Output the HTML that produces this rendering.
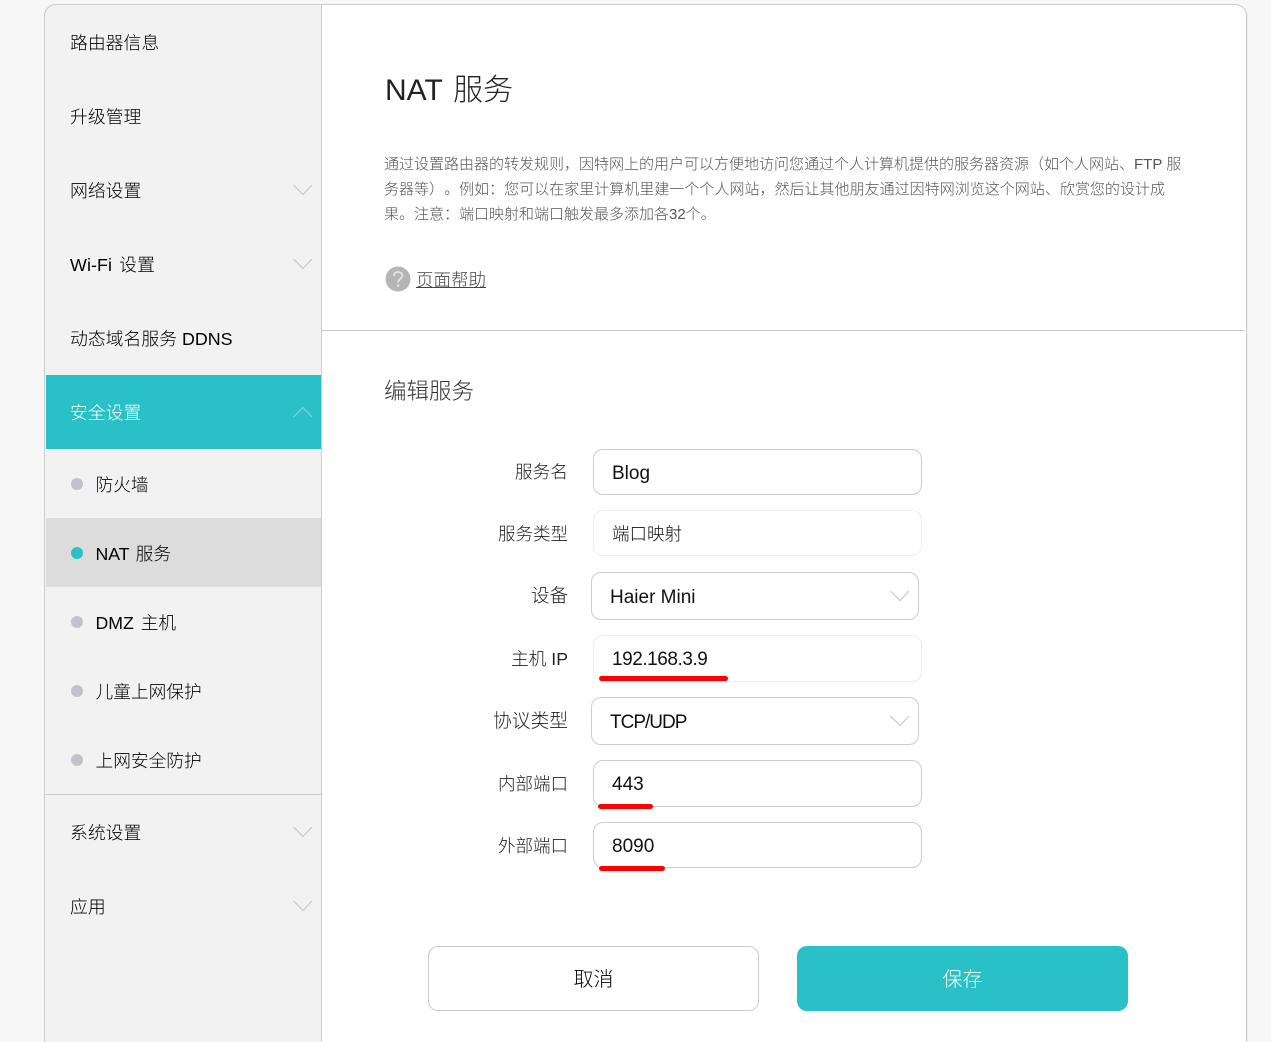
<!DOCTYPE html>
<html lang="zh-CN">
<head>
<meta charset="utf-8">
<title>NAT 服务</title>
<style>
html,body{margin:0;padding:0;width:1271px;height:1042px;overflow:hidden;background:#f7f7f7}
body{position:relative;font-family:"Liberation Sans","Noto Sans CJK SC",sans-serif;font-weight:300;color:#222}
div,a,svg{position:absolute;box-sizing:border-box}
#card{left:44px;top:4px;width:1203px;height:1060px;background:#fff;border:1px solid #ccc;border-radius:12px;overflow:hidden;box-shadow:1px 0 1px rgba(0,0,0,.04)}
#side{left:44px;top:4px;width:278px;height:1060px;background:#f2f2f2;border:1px solid #ccc;border-radius:12px 0 0 0}
.m{left:70px;font-size:17.85px;line-height:26px;height:26px;white-space:nowrap;color:#000}
.s{left:95.5px;font-size:17.7px;line-height:26px;height:26px;white-space:nowrap;color:#000}
.dot{left:71px;width:12px;height:12px;border-radius:50%;background:#c0c2cc}
.chev{width:20px;height:12px;fill:none;stroke:#c9c9c9;stroke-width:1.2}
.p{left:384px;font-size:15px;line-height:25px;height:25px;white-space:nowrap;color:#555;text-align-last:justify}
.l{right:703px;font-size:17.5px;line-height:26px;height:26px;white-space:nowrap;text-align:right;color:#222}
.i{background:#fff;border:1px solid #ccc;border-radius:10px;font-size:19px;color:#111;padding-left:18px;white-space:nowrap}
.r{background:#f00;height:5px;border-radius:3px}
.b{top:946px;width:331px;height:65px;border-radius:10px;font-size:20px;line-height:65px;text-align:center}
</style>
</head>
<body>
<div id="card"></div>
<div id="side"></div>

<div class="m" style="top:30px">路由器信息</div>
<div class="m" style="top:104px">升级管理</div>
<div class="m" style="top:178px">网络设置</div>
<svg class="chev" style="left:293px;top:184px" viewBox="0 0 20 12"><path d="M0.5 1 L10 10.5 L19 1"/></svg>
<div class="m" style="top:252px;word-spacing:2px;letter-spacing:.1px">Wi-Fi 设置</div>
<svg class="chev" style="left:293px;top:258px" viewBox="0 0 20 12"><path d="M0.5 1 L10 10.5 L19 1"/></svg>
<div class="m" style="top:326px">动态域名服务 DDNS</div>

<div style="left:46px;top:375px;width:275px;height:74px;background:#29c0c8"></div>
<div class="m" style="top:400px;color:#fff">安全设置</div>
<svg class="chev" style="left:293px;top:406px;stroke:#7ad8dc" viewBox="0 0 20 12"><path d="M0.5 11 L10 1.5 L19 11"/></svg>

<div class="dot" style="top:478px"></div>
<div class="s" style="top:472px">防火墙</div>
<div style="left:46px;top:518px;width:275px;height:69px;background:#dcdcdc"></div>
<div class="dot" style="top:547px;background:#29c0c8"></div>
<div class="s" style="top:541px;word-spacing:1.5px">NAT 服务</div>
<div class="dot" style="top:616px"></div>
<div class="s" style="top:610px;word-spacing:2px">DMZ 主机</div>
<div class="dot" style="top:685px"></div>
<div class="s" style="top:679px">儿童上网保护</div>
<div class="dot" style="top:754px"></div>
<div class="s" style="top:748px">上网安全防护</div>

<div style="left:45px;top:794px;width:276px;height:1px;background:#ccc"></div>
<div class="m" style="top:820px">系统设置</div>
<svg class="chev" style="left:293px;top:826px" viewBox="0 0 20 12"><path d="M0.5 1 L10 10.5 L19 1"/></svg>
<div class="m" style="top:894px">应用</div>
<svg class="chev" style="left:293px;top:900px" viewBox="0 0 20 12"><path d="M0.5 1 L10 10.5 L19 1"/></svg>

<div style="left:385px;top:70px;font-size:30px;line-height:42px;white-space:nowrap;color:#222;word-spacing:2.5px">NAT 服务</div>

<div class="p" style="top:152px;width:796px">通过设置路由器的转发规则，因特网上的用户可以方便地访问您通过个人计算机提供的服务器资源（如个人网站、FTP 服</div>
<div class="p" style="top:177px;width:781px">务器等）<span style="display:inline-block;width:0"></span>。例如：您可以在家里计算机里建一个个人网站，然后让其他朋友通过因特网浏览这个网站、欣赏您的设计成</div>
<div class="p" style="top:202px;text-align-last:left">果。注意：端口映射和端口触发最多添加各32个。</div>

<svg style="left:385px;top:266px;width:26px;height:26px" viewBox="0 0 26 26">
<circle cx="13" cy="13" r="12.5" fill="#b5b5b5"/>
<path d="M9 10 C9 7.2 11 6 13.2 6 C15.6 6 17.4 7.6 17.4 9.6 C17.4 11.6 15.8 12.4 14.6 13.4 C13.6 14.2 13.2 15 13.2 16.6" fill="none" stroke="#e6e6e6" stroke-width="1.7"/>
<circle cx="13.2" cy="19.6" r="1.2" fill="#e6e6e6"/>
</svg>
<a style="left:416px;top:267px;font-size:17.5px;line-height:26px;white-space:nowrap;color:#444;text-decoration:underline">页面帮助</a>

<div style="left:322px;top:330px;width:923px;height:1px;background:#ccc"></div>

<div style="left:384px;top:375px;font-size:22.5px;line-height:34px;white-space:nowrap;color:#333">编辑服务</div>

<div class="l" style="top:459px;font-size:17.7px">服务名</div>
<div class="i" style="left:593px;top:449px;width:329px;height:46px;line-height:47px">Blog</div>
<div class="l" style="top:521px">服务类型</div>
<div class="i" style="left:593px;top:510px;width:329px;height:46px;line-height:47px;border-color:#eee;font-size:17.5px">端口映射</div>
<div class="l" style="top:583px;font-size:18.5px">设备</div>
<div class="i" style="left:591px;top:572px;width:328px;height:48px;line-height:50px">Haier Mini</div>
<svg class="chev" style="left:890px;top:590px" viewBox="0 0 20 12"><path d="M0.5 1 L10 10.5 L19 1"/></svg>
<div class="l" style="top:646px;font-size:17.7px">主机 IP</div>
<div class="i" style="left:593px;top:635px;width:329px;height:47px;line-height:47px;border-color:#eee;letter-spacing:-.45px">192.168.3.9</div>
<div class="r" style="left:599px;top:676px;width:129px"></div>
<div class="l" style="top:708px;font-size:18.75px">协议类型</div>
<div class="i" style="left:591px;top:697px;width:328px;height:48px;line-height:50px;letter-spacing:-1px">TCP/UDP</div>
<svg class="chev" style="left:890px;top:715px" viewBox="0 0 20 12"><path d="M0.5 1 L10 10.5 L19 1"/></svg>
<div class="l" style="top:771px">内部端口</div>
<div class="i" style="left:593px;top:760px;width:329px;height:47px;line-height:47px">443</div>
<div class="r" style="left:598px;top:804px;width:55px"></div>
<div class="l" style="top:833px">外部端口</div>
<div class="i" style="left:593px;top:822px;width:329px;height:46px;line-height:48px">8090</div>
<div class="r" style="left:599px;top:866px;width:66px"></div>

<div class="b" style="left:428px;background:#fff;border:1px solid #ccc;color:#000;line-height:67px">取消</div>
<div class="b" style="left:797px;background:#29c0c8;color:#fff;line-height:69px">保存</div>
</body>
</html>
